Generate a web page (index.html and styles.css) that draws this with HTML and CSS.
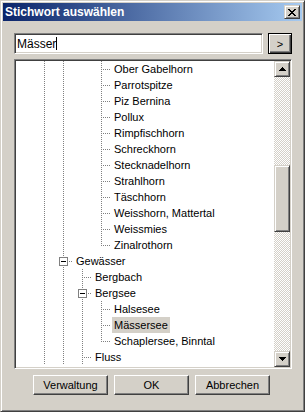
FILE: index.html
```html
<!DOCTYPE html>
<html lang="de">
<head>
  <meta charset="UTF-8">
  <title>Stichwort auswählen</title>
  <link rel="stylesheet" href="styles.css">
</head>
<body>

  <div class="window">
    <div class="titlebar">
      <span class="title">Stichwort auswählen</span>
      <span class="close-btn">
        <svg width="8" height="7" viewBox="0 0 8 7"><path d="M0 0h2v1h-2zM6 0h2v1h-2zM1 1h2v1h-2zM5 1h2v1h-2zM2 2h4v1h-4zM3 3h2v1h-2zM2 4h4v1h-4zM1 5h2v1h-2zM5 5h2v1h-2zM0 6h2v1h-2zM6 6h2v1h-2z" fill="#000"/></svg>
      </span>
    </div>

    <div class="content">
      <div class="search-row">
        <div class="field"><span>Mässer</span><span class="caret"></span></div>
        <button class="btn btn-default go">&gt;</button>
      </div>

      <div class="tree">
        <ul class="tree-list">
          <li class="row"><span class="g line"></span><span class="g line"></span><span class="g"></span><span class="g tee"></span><span class="label">Ober Gabelhorn</span></li>
          <li class="row"><span class="g line"></span><span class="g line"></span><span class="g"></span><span class="g tee"></span><span class="label">Parrotspitze</span></li>
          <li class="row"><span class="g line"></span><span class="g line"></span><span class="g"></span><span class="g tee"></span><span class="label">Piz Bernina</span></li>
          <li class="row"><span class="g line"></span><span class="g line"></span><span class="g"></span><span class="g tee"></span><span class="label">Pollux</span></li>
          <li class="row"><span class="g line"></span><span class="g line"></span><span class="g"></span><span class="g tee"></span><span class="label">Rimpfischhorn</span></li>
          <li class="row"><span class="g line"></span><span class="g line"></span><span class="g"></span><span class="g tee"></span><span class="label">Schreckhorn</span></li>
          <li class="row"><span class="g line"></span><span class="g line"></span><span class="g"></span><span class="g tee"></span><span class="label">Stecknadelhorn</span></li>
          <li class="row"><span class="g line"></span><span class="g line"></span><span class="g"></span><span class="g tee"></span><span class="label">Strahlhorn</span></li>
          <li class="row"><span class="g line"></span><span class="g line"></span><span class="g"></span><span class="g tee"></span><span class="label">Täschhorn</span></li>
          <li class="row"><span class="g line"></span><span class="g line"></span><span class="g"></span><span class="g tee"></span><span class="label">Weisshorn, Mattertal</span></li>
          <li class="row"><span class="g line"></span><span class="g line"></span><span class="g"></span><span class="g tee"></span><span class="label">Weissmies</span></li>
          <li class="row"><span class="g line"></span><span class="g line"></span><span class="g"></span><span class="g corner"></span><span class="label">Zinalrothorn</span></li>
          <li class="row"><span class="g line"></span><span class="g tee"><span class="toggle"></span></span><span class="label">Gewässer</span></li>
          <li class="row"><span class="g line"></span><span class="g line"></span><span class="g tee"></span><span class="label">Bergbach</span></li>
          <li class="row"><span class="g line"></span><span class="g line"></span><span class="g tee"><span class="toggle"></span></span><span class="label">Bergsee</span></li>
          <li class="row"><span class="g line"></span><span class="g line"></span><span class="g line"></span><span class="g tee"></span><span class="label">Halsesee</span></li>
          <li class="row"><span class="g line"></span><span class="g line"></span><span class="g line"></span><span class="g tee"></span><span class="label selected">Mässersee</span></li>
          <li class="row"><span class="g line"></span><span class="g line"></span><span class="g line"></span><span class="g corner"></span><span class="label">Schaplersee, Binntal</span></li>
          <li class="row"><span class="g line"></span><span class="g line"></span><span class="g tee"></span><span class="label">Fluss</span></li>
        </ul>

        <div class="scrollbar">
          <div class="sb-btn">
            <svg width="7" height="4" viewBox="0 0 7 4"><path d="M3 0h1v1h-1zM2 1h3v1h-3zM1 2h5v1h-5zM0 3h7v1h-7z" fill="#000"/></svg>
          </div>
          <div class="sb-track">
            <div class="sb-thumb"></div>
          </div>
          <div class="sb-btn">
            <svg width="7" height="4" viewBox="0 0 7 4"><path d="M0 0h7v1h-7zM1 1h5v1h-5zM2 2h3v1h-3zM3 3h1v1h-1z" fill="#000"/></svg>
          </div>
        </div>
      </div>

      <div class="buttons">
        <button class="btn">Verwaltung</button>
        <button class="btn">OK</button>
        <button class="btn">Abbrechen</button>
      </div>
    </div>
  </div>

</body>
</html>
```

FILE: styles.css
```css
body {
  margin: 0;
  font-family: "Liberation Sans", Arial, sans-serif;
  font-size: 11px;
  color: #000;
}

.window {
  width: 305px;
  height: 412px;
  box-sizing: border-box;
  background: #d4d0c8;
  border: 1px solid;
  border-color: #d4d0c8 #404040 #404040 #d4d0c8;
  box-shadow: inset 1px 1px #fff, inset -1px -1px #808080;
  padding: 2px;
}

.titlebar {
  height: 18px;
  display: flex;
  align-items: center;
  justify-content: space-between;
  padding: 0 2px 0 2px;
  background: linear-gradient(90deg, #0a246a, #a6caf0);
}

.title {
  color: #fff;
  font-weight: bold;
  font-size: 12px;
}

.close-btn {
  width: 16px;
  height: 14px;
  box-sizing: border-box;
  display: flex;
  align-items: center;
  justify-content: center;
  background: #d4d0c8;
  border: 1px solid;
  border-color: #d4d0c8 #404040 #404040 #d4d0c8;
  box-shadow: inset 1px 1px #fff, inset -1px -1px #808080;
}

.content {
  padding: 12px 10px 0 11px;
}

.search-row {
  display: flex;
  gap: 5px;
}

.field {
  width: 249px;
  height: 21px;
  box-sizing: border-box;
  display: flex;
  align-items: center;
  padding-left: 2px;
  background: #fff;
  border: 1px solid;
  border-color: #808080 #fff #fff #808080;
  box-shadow: inset 1px 1px #404040, inset -1px -1px #d4d0c8;
  font-size: 12px;
}

.caret {
  width: 1px;
  height: 13px;
  background: #000;
}

.btn {
  height: 20px;
  box-sizing: border-box;
  padding: 0;
  background: #d4d0c8;
  border: 1px solid;
  border-color: #fff #404040 #404040 #fff;
  box-shadow: inset -1px -1px #808080;
  font-family: inherit;
  font-size: 11px;
  color: #000;
}

.btn-default {
  border-color: #000;
  box-shadow: inset 1px 1px #fff, inset -1px -1px #404040, inset -2px -2px #808080;
}

.go {
  width: 24px;
  height: 21px;
}

.tree {
  margin-top: 5px;
  width: 278px;
  height: 310px;
  box-sizing: border-box;
  display: flex;
  padding: 1px;
  background: #fff;
  border: 1px solid;
  border-color: #808080 #fff #fff #808080;
  box-shadow: inset 1px 1px #404040, inset -1px -1px #d4d0c8;
}

.tree-list {
  flex: 1;
  list-style: none;
  margin: 0;
  padding: 0 0 0 19px;
  overflow: hidden;
}

.row {
  display: flex;
  height: 16px;
  line-height: 16px;
  white-space: nowrap;
}

.g {
  width: 19px;
  height: 16px;
  flex: none;
  display: flex;
  justify-content: center;
  align-items: flex-start;
}

.g.line {
  background: repeating-linear-gradient(#808080 0 1px, transparent 1px 2px) 9px 0 / 1px 16px no-repeat;
}

.g.tee {
  background:
    repeating-linear-gradient(#808080 0 1px, transparent 1px 2px) 9px 0 / 1px 16px no-repeat,
    repeating-linear-gradient(90deg, transparent 0 1px, #808080 1px 2px) 10px 8px / 9px 1px no-repeat;
}

.g.corner {
  background:
    repeating-linear-gradient(#808080 0 1px, transparent 1px 2px) 9px 0 / 1px 9px no-repeat,
    repeating-linear-gradient(90deg, transparent 0 1px, #808080 1px 2px) 10px 8px / 9px 1px no-repeat;
}

.toggle {
  width: 9px;
  height: 9px;
  box-sizing: border-box;
  margin-top: 4px;
  margin-right: 1px;
  border: 1px solid #808080;
  background: linear-gradient(#000, #000) center / 5px 1px no-repeat, #fff;
}

.label {
  margin-left: 1px;
  padding: 0 2px;
}

.label.selected {
  background: #d4d0c8;
}

.scrollbar {
  width: 16px;
  flex: none;
  display: flex;
  flex-direction: column;
}

.sb-btn {
  height: 16px;
  box-sizing: border-box;
  display: flex;
  align-items: center;
  justify-content: center;
  background: #d4d0c8;
  border: 1px solid;
  border-color: #d4d0c8 #404040 #404040 #d4d0c8;
  box-shadow: inset 1px 1px #fff, inset -1px -1px #808080;
}

.sb-track {
  flex: 1;
  background: repeating-conic-gradient(#fff 0 25%, #d4d0c8 0 50%) 0 0 / 2px 2px;
}

.sb-thumb {
  margin-top: 88px;
  height: 67px;
  box-sizing: border-box;
  background: #d4d0c8;
  border: 1px solid;
  border-color: #d4d0c8 #404040 #404040 #d4d0c8;
  box-shadow: inset 1px 1px #fff, inset -1px -1px #808080;
}

.buttons {
  display: flex;
  gap: 6px;
  margin-top: 6px;
  padding-left: 19px;
}

.buttons .btn {
  width: 75px;
}
```
